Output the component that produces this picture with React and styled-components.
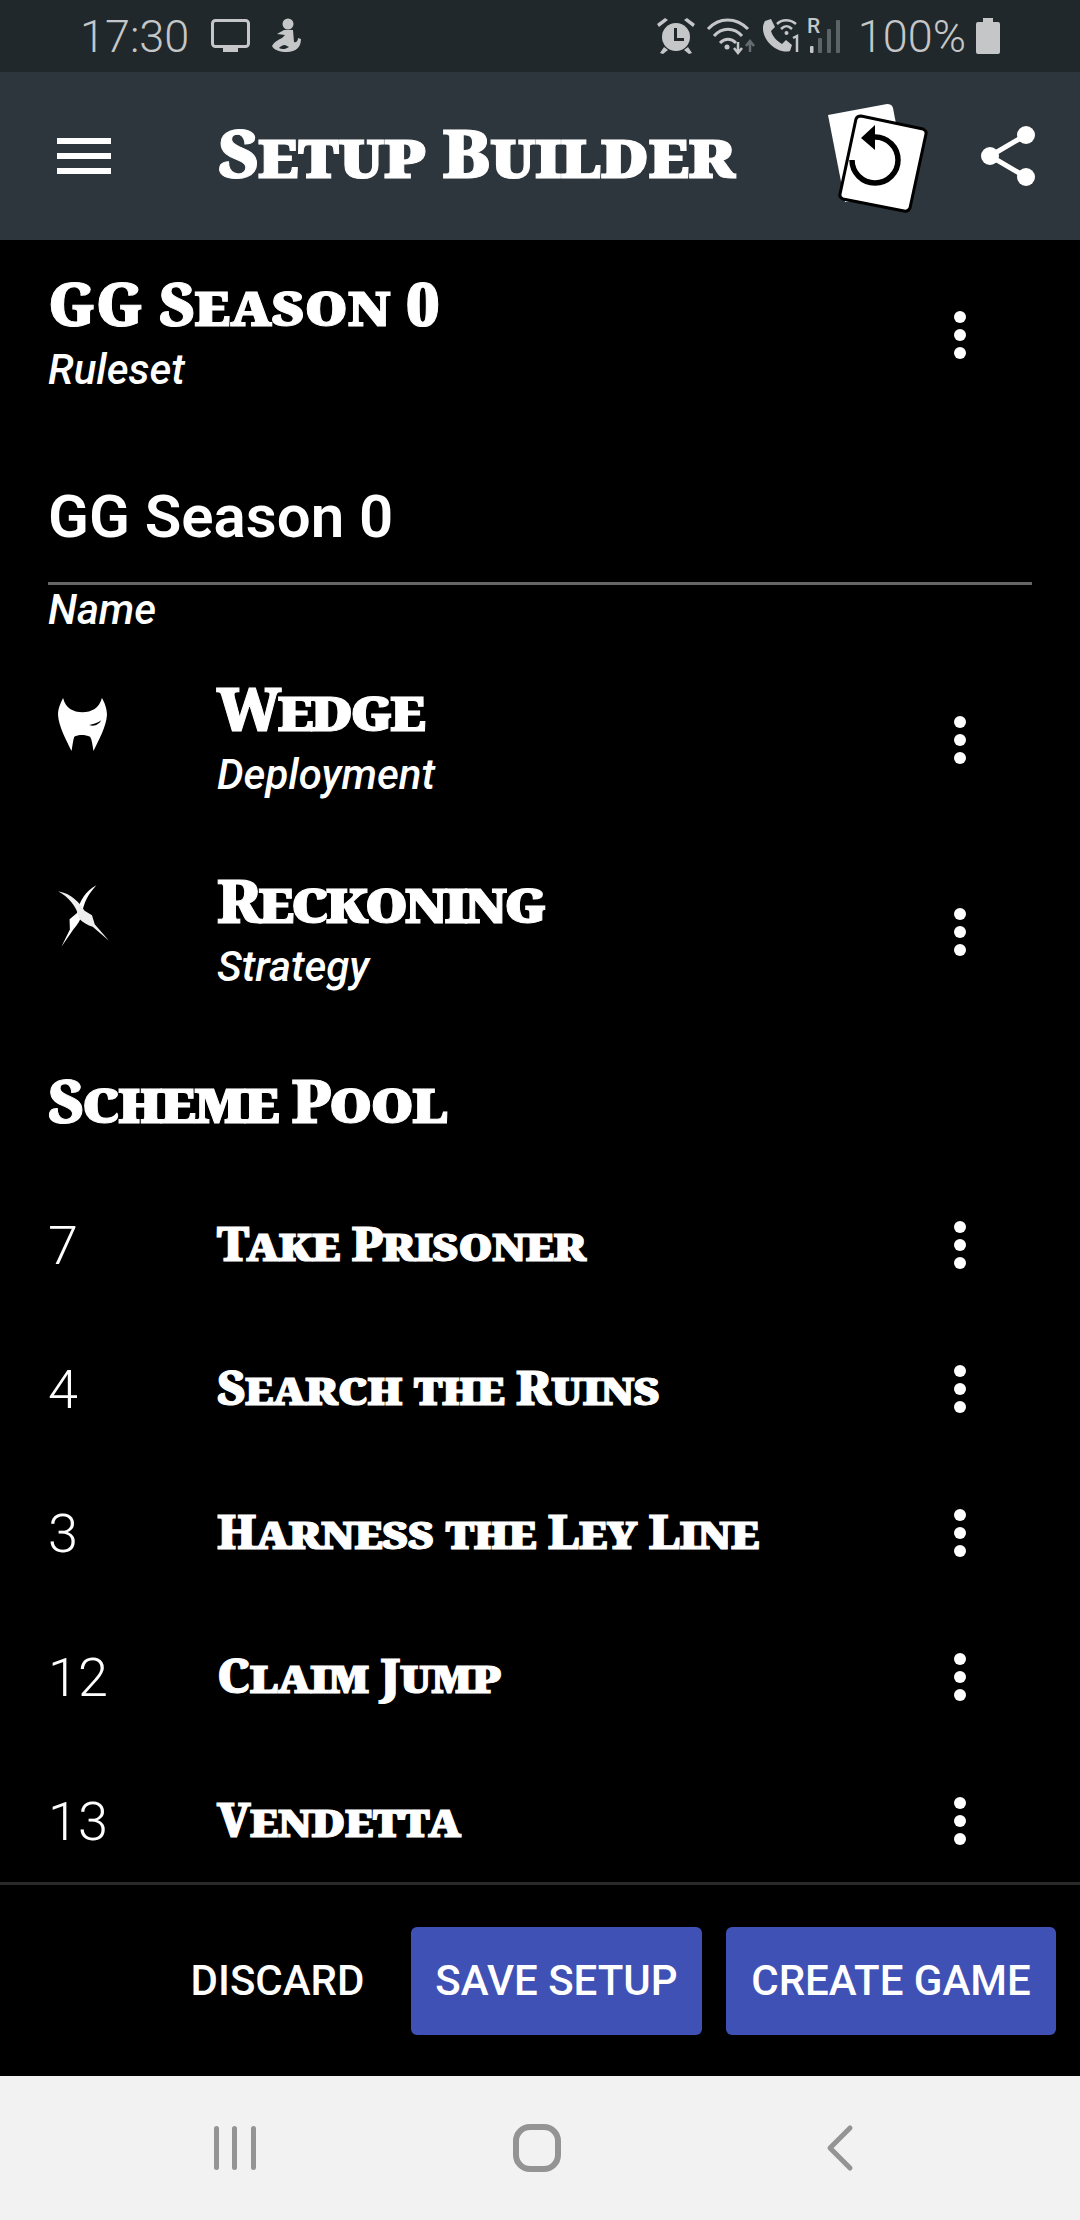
import React from 'react';
import styled, { createGlobalStyle, css } from 'styled-components';

const GlobalStyle = createGlobalStyle`
  html, body { margin: 0; padding: 0; background: #000; }
  * { box-sizing: border-box; }
  svg { display: block; overflow: visible; }
`;

const slabType = css`
  font-family: "Noto Serif", "DejaVu Serif", serif;
  font-variant: small-caps;
  font-weight: 900;
  -webkit-text-stroke: 1px #fff;
  white-space: nowrap;
`;

const Screen = styled.div`
  width: 1080px;
  height: 2220px;
  display: flex;
  flex-direction: column;
  background: #000;
  color: #fff;
  font-family: Roboto, sans-serif;
  overflow: hidden;
`;

const StatusBar = styled.div`
  height: 72px;
  flex: none;
  background: #20282b;
  color: #c4c6c7;
  display: flex;
  align-items: center;
  padding: 0 80px 0 80px;
  font-size: 45px;
  font-weight: 300;
`;

const StatusGroup = styled.div`
  display: flex;
  align-items: center;
  gap: ${p => p.$gap || 0}px;
`;

const StatusItem = styled.div`
  margin-right: ${p => p.$after || 0}px;
`;

const Spacer = styled.div`
  flex: 1;
`;

const Toolbar = styled.div`
  height: 168px;
  flex: none;
  background: #2d363c;
  display: flex;
  align-items: center;
  padding: 0 45px 0 57px;
`;

const ToolbarTitle = styled.div`
  ${slabType}
  margin-left: 107px;
  padding-bottom: 8px;
  flex: 1;
  font-size: 67px;
  letter-spacing: -0.5px;
`;

const CardsSlot = styled.div`
  margin-top: 4px;
`;

const Content = styled.div`
  flex: 1;
  min-height: 0;
  overflow: hidden;
`;

const Row = styled.div`
  height: ${p => p.$height}px;
  display: flex;
  align-items: center;
  padding: 0 96px 0 48px;
`;

const Lead = styled.div`
  width: 169px;
  flex: none;
  font-size: 54px;
  font-weight: 350;
`;

const IconLead = styled(Lead)`
  padding-left: 10px;
  margin-bottom: 32px;
`;

const RowBody = styled.div`
  flex: 1;
  min-width: 0;
`;

const CardTitle = styled.div`
  ${slabType}
  font-size: 59px;
  line-height: 70px;
  margin: -4px 0 4px;
  letter-spacing: ${p => p.$spacing || 0}px;
`;

const SchemeTitle = styled.div`
  ${slabType}
  font-size: 47px;
  line-height: 70px;
  letter-spacing: -0.5px;
  margin: -2px 0 2px;
`;

const Caption = styled.div`
  font-style: italic;
  font-weight: 500;
  font-size: 42px;
  line-height: 56px;
`;

const NameBlock = styled.div`
  height: 214px;
  padding: 57px 48px 0;
`;

const NameValue = styled.div`
  font-size: 60px;
  font-weight: 600;
  line-height: 60px;
  height: 98px;
  border-bottom: 3px solid #666;
  width: 984px;
`;

const NameCaption = styled(Caption)`
  margin-top: -3px;
`;

const PoolHeading = styled.div`
  ${slabType}
  height: 145px;
  display: flex;
  align-items: center;
  padding: 0 0 1px 48px;
  font-size: 59px;
  letter-spacing: -1.7px;
`;

const Footer = styled.div`
  height: 194px;
  flex: none;
  border-top: 3px solid #2a2a2a;
  display: flex;
  align-items: center;
  justify-content: flex-end;
  gap: 24px;
  padding: 0 24px 0 0;
`;

const ActionButton = styled.div`
  height: 108px;
  width: ${p => p.$width}px;
  border-radius: 6px;
  background: ${p => (p.$primary ? '#3f51b5' : 'transparent')};
  color: #fff;
  font-size: 42px;
  font-weight: 500;
  display: flex;
  align-items: center;
  justify-content: center;
  white-space: nowrap;
`;

const NavBar = styled.div`
  height: 144px;
  flex: none;
  background: #f2f2f2;
  display: flex;
  align-items: center;
  padding-left: 214px;
`;

const NavSlot = styled.div`
  margin-right: ${p => p.$after}px;
  display: flex;
`;

const Kebab = () => (
  <svg width="48" height="48" viewBox="0 0 48 48" fill="#fff">
    <circle cx="24" cy="6" r="6" />
    <circle cx="24" cy="24" r="6" />
    <circle cx="24" cy="42" r="6" />
  </svg>
);

const MenuIcon = () => (
  <svg width="54" height="36" viewBox="0 0 54 36" fill="#fff">
    <rect width="54" height="6" />
    <rect y="15" width="54" height="6" />
    <rect y="30" width="54" height="6" />
  </svg>
);

const CardsIcon = () => (
  <svg width="102" height="112" viewBox="0 0 102 112">
    <path d="M3 13 L62 2 Q67 2 68 6 L84 90 L20 100 Z" fill="#fff" strokeLinejoin="round" />
    <path d="M36 14 L98 27 Q102 29 101 32 L85 106 Q83 110 79 109 L18 97 Q14 95 15 92 L31 17 Q32 14 36 14 Z" fill="#fff" stroke="#000" strokeWidth="3" />
    <path d="M50 35 A23 23 0 1 1 27 58" fill="none" stroke="#000" strokeWidth="5.5" />
    <path d="M36 36 L50 23 L50 48 Z" fill="#000" />
  </svg>
);

const ShareIcon = () => (
  <svg width="54" height="60" viewBox="0 0 54 60" fill="#fff">
    <path d="M45 9 L9 30 L45 51" fill="none" stroke="#fff" strokeWidth="5" />
    <circle cx="45" cy="9" r="9" />
    <circle cx="9" cy="30" r="9" />
    <circle cx="45" cy="51" r="9" />
  </svg>
);

const MaskIcon = () => (
  <svg width="49" height="53" viewBox="0 0 145 157">
    <path
      d="M15 0 C22 30 45 42 72 42 C100 42 122 30 130 0 C137 12 145 30 145 50 C143 85 120 125 105 157 C102 140 101 125 95 115 C80 108 60 108 48 115 C44 128 43 142 40 157 C25 125 2 85 0 50 C0 30 8 14 15 0 Z"
      fill="#fff"
    />
    <path d="M92 80 C105 78 118 74 128 66 C122 78 108 86 92 80 Z" fill="#000" />
  </svg>
);

const BladesIcon = () => (
  <svg width="51" height="62" viewBox="0 0 150 181">
    <path d="M113 0 C82 15 62 48 56 82 L34 100 L35 130 L10 181 L45 130 C58 115 66 102 70 88 C75 50 90 25 113 0 Z" fill="#fff" />
    <path d="M0 18 C40 25 62 50 78 75 L100 88 L108 115 L150 163 L102 122 C88 118 72 110 62 98 C55 60 30 35 0 18 Z" fill="#eee" />
  </svg>
);

const TvIcon = () => (
  <svg width="39" height="34" viewBox="0 0 39 34" fill="none">
    <rect x="1.5" y="1.5" width="36" height="26" rx="3" stroke="#c4c6c7" strokeWidth="3" />
    <rect x="12" y="28" width="15" height="5" fill="#c4c6c7" />
  </svg>
);

const FigureIcon = () => (
  <svg width="30" height="36" viewBox="0 0 30 36" fill="#c4c6c7">
    <circle cx="16" cy="6" r="5.5" />
    <path d="M12 12 L21 12 L22 24 C24 25 26 23 26 20 L29 21 C29 29 24 34 15 34 C8 34 2 32 0 28 C2 24 6 22 10 20 L13 17 L5 16 Z" />
    <path d="M13 27 C10 27 8 29 7 30 C10 32 14 31 17 29 Z" fill="#20282b" />
  </svg>
);

const AlarmIcon = () => (
  <svg width="38" height="36" viewBox="0 0 38 36" fill="#c4c6c7">
    <circle cx="19" cy="19" r="14" />
    <path d="M11 2 L2 9 L0 6 L8 0 Z M27 2 L36 9 L38 6 L30 0 Z M7 29 L3 35 L6 36 L11 32 Z M31 29 L35 35 L32 36 L27 32 Z" />
    <path d="M17 10 H20 V20 H27 V23 H17 Z" fill="#20282b" />
  </svg>
);

const WifiIcon = () => (
  <svg width="48" height="36" viewBox="0 0 48 36" fill="none" stroke="#c4c6c7" strokeWidth="3">
    <path d="M1 11 C12 -1 29 -1 41 11" />
    <path d="M7 18 C15 9 27 9 35 18" />
    <path d="M13 25 C18 20 24 20 29 25" />
    <circle cx="20" cy="29" r="2.5" fill="#c4c6c7" stroke="none" />
    <path d="M31 24 V34 M27 30 L31 35 L35 30" strokeWidth="2.5" />
    <path d="M43 34 V24 M39 28 L43 23 L47 28" stroke="#666d70" strokeWidth="2.5" />
  </svg>
);

const CallIcon = () => (
  <svg width="42" height="36" viewBox="0 0 42 36" fill="none">
    <path d="M5 3 L11 1 L15 9 L11 13 C13 19 17 23 22 26 L26 22 L32 27 L30 33 C24 35 16 32 10 26 C3 19 1 9 5 3 Z" fill="#c4c6c7" />
    <path d="M17 6 C22 1 30 1 36 6 M21 11 C25 7 28 7 32 11" stroke="#c4c6c7" strokeWidth="2.5" />
    <circle cx="26.5" cy="15" r="2" fill="#c4c6c7" />
    <path d="M33 20 L37 18 V34" stroke="#c4c6c7" strokeWidth="2.5" />
  </svg>
);

const SignalIcon = () => (
  <svg width="34" height="36" viewBox="0 0 34 36" fill="#c4c6c7">
    <text x="-1" y="15" fontFamily="Roboto, sans-serif" fontSize="21" fontWeight="500">R</text>
    <rect x="2" y="28" width="3.5" height="7" rx="1" />
    <rect x="10" y="20" width="4" height="15" rx="1" fill="#5d6467" />
    <rect x="19" y="11" width="4" height="24" rx="1" fill="#5d6467" />
    <rect x="28" y="2" width="4" height="33" rx="1" fill="#5d6467" />
  </svg>
);

const BatteryIcon = () => (
  <svg width="24" height="36" viewBox="0 0 24 36" fill="#c4c6c7">
    <path d="M7 0 H17 V4 H22 Q24 4 24 6 V34 Q24 36 22 36 H2 Q0 36 0 34 V6 Q0 4 2 4 H7 Z" />
  </svg>
);

const RecentsIcon = () => (
  <svg width="42" height="46" viewBox="0 0 42 46" fill="#949494">
    <rect x="0" y="1" width="5" height="44" rx="2.5" />
    <rect x="18" y="1" width="5" height="44" rx="2.5" />
    <rect x="37" y="1" width="5" height="44" rx="2.5" />
  </svg>
);

const HomeIcon = () => (
  <svg width="48" height="48" viewBox="0 0 48 48" fill="none">
    <rect x="3" y="3" width="42" height="42" rx="14" stroke="#949494" strokeWidth="6" />
  </svg>
);

const BackIcon = () => (
  <svg width="27" height="46" viewBox="0 0 27 46" fill="none">
    <path d="M24 3 L4 23 L24 43" stroke="#949494" strokeWidth="5" strokeLinecap="round" strokeLinejoin="round" />
  </svg>
);

const schemes = [
  ['7', 'Take Prisoner'],
  ['4', 'Search the Ruins'],
  ['3', 'Harness the Ley Line'],
  ['12', 'Claim Jump'],
  ['13', 'Vendetta'],
];

export default function App() {
  return (
    <Screen>
      <GlobalStyle />
      <StatusBar>
        <StatusGroup $gap={22}>
          17:30
          <TvIcon />
          <FigureIcon />
        </StatusGroup>
        <Spacer />
        <StatusGroup>
          <StatusItem $after={12}><AlarmIcon /></StatusItem>
          <StatusItem $after={5}><WifiIcon /></StatusItem>
          <StatusItem $after={6}><CallIcon /></StatusItem>
          <StatusItem $after={16}><SignalIcon /></StatusItem>
          <StatusItem $after={10}>100%</StatusItem>
          <BatteryIcon />
        </StatusGroup>
      </StatusBar>
      <Toolbar>
        <MenuIcon />
        <ToolbarTitle>Setup Builder</ToolbarTitle>
        <StatusGroup $gap={54}>
          <CardsSlot><CardsIcon /></CardsSlot>
          <ShareIcon />
        </StatusGroup>
      </Toolbar>
      <Content>
        <Row $height={190}>
          <RowBody>
            <CardTitle>GG Season 0</CardTitle>
            <Caption>Ruleset</Caption>
          </RowBody>
          <Kebab />
        </Row>
        <NameBlock>
          <NameValue>GG Season 0</NameValue>
          <NameCaption>Name</NameCaption>
        </NameBlock>
        <Row $height={192}>
          <IconLead><MaskIcon /></IconLead>
          <RowBody>
            <CardTitle $spacing={-3}>Wedge</CardTitle>
            <Caption>Deployment</Caption>
          </RowBody>
          <Kebab />
        </Row>
        <Row $height={192}>
          <IconLead><BladesIcon /></IconLead>
          <RowBody>
            <CardTitle $spacing={-3}>Reckoning</CardTitle>
            <Caption>Strategy</Caption>
          </RowBody>
          <Kebab />
        </Row>
        <PoolHeading>Scheme Pool</PoolHeading>
        {schemes.map(([count, name]) => (
          <Row $height={144} key={name}>
            <Lead>{count}</Lead>
            <RowBody>
              <SchemeTitle>{name}</SchemeTitle>
            </RowBody>
            <Kebab />
          </Row>
        ))}
      </Content>
      <Footer>
        <ActionButton $width={219}>DISCARD</ActionButton>
        <ActionButton $primary $width={291}>SAVE SETUP</ActionButton>
        <ActionButton $primary $width={330}>CREATE GAME</ActionButton>
      </Footer>
      <NavBar>
        <NavSlot $after={257}><RecentsIcon /></NavSlot>
        <NavSlot $after={265}><HomeIcon /></NavSlot>
        <NavSlot $after={0}><BackIcon /></NavSlot>
      </NavBar>
    </Screen>
  );
}
